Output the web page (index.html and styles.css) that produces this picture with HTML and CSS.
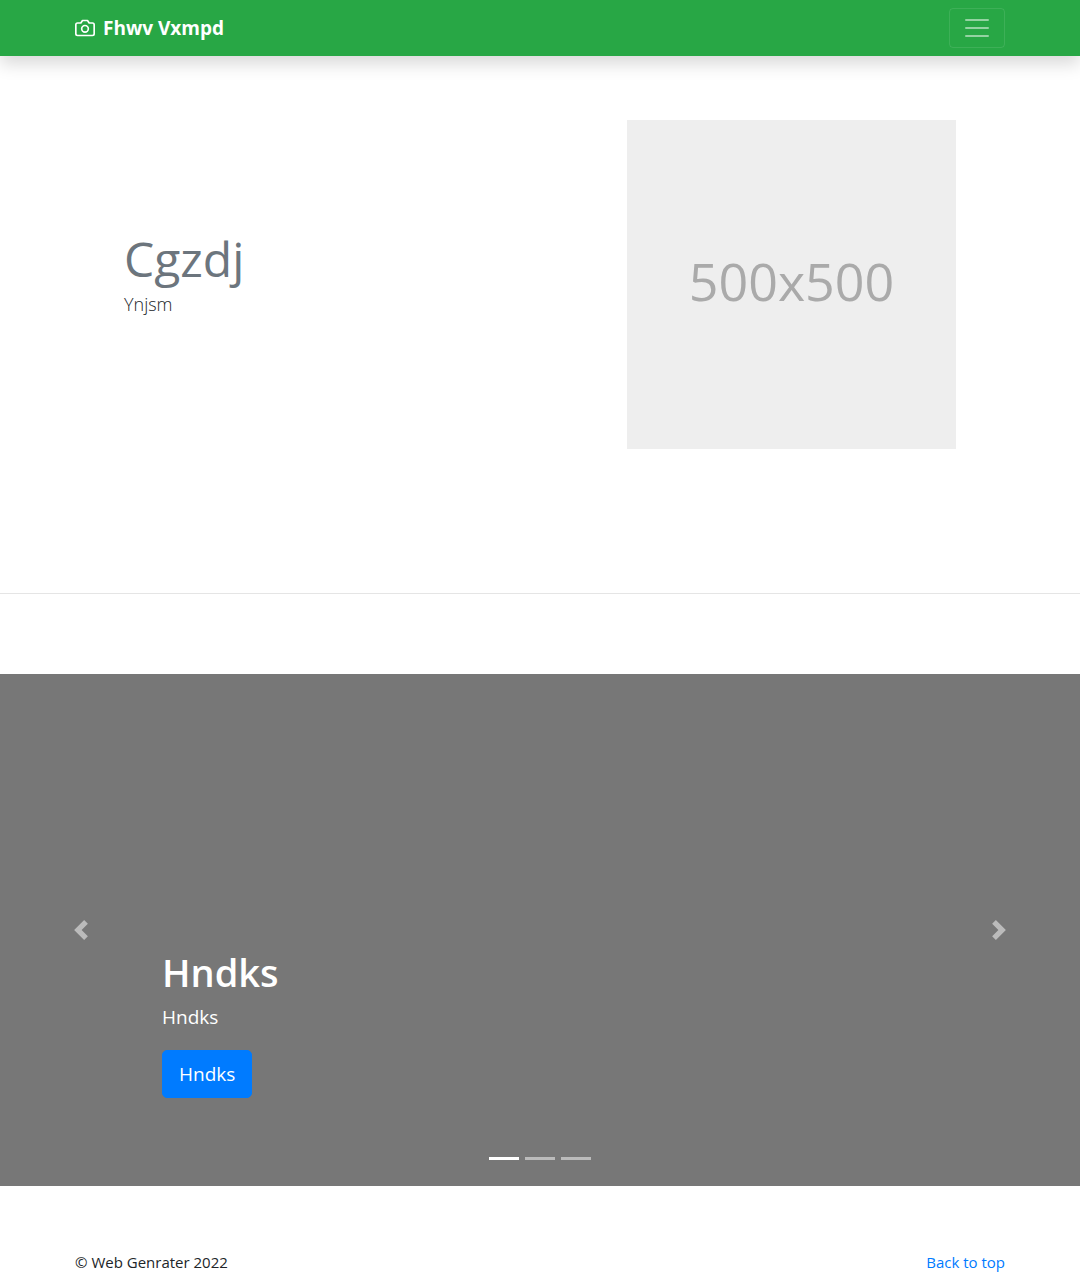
FILE: index.html
```html
<!DOCTYPE html>
<html lang="en">
<head>
<meta charset="utf-8">
<meta name="viewport" content="width=device-width, initial-scale=1">
<title>Fhwv Vxmpd</title>
<link rel="stylesheet" href="styles.css">
</head>
<body id="top">
<header class="navbar">
  <div class="container navbar-inner">
    <a class="brand" href="#top">
      <svg class="brand-icon" viewBox="0 0 24 24" fill="none" stroke="currentColor" stroke-width="2" stroke-linecap="round" stroke-linejoin="round" aria-hidden="true"><path d="M23 19a2 2 0 0 1-2 2H3a2 2 0 0 1-2-2V8a2 2 0 0 1 2-2h4l2-3h6l2 3h4a2 2 0 0 1 2 2z"/><circle cx="12" cy="13" r="4"/></svg>
      <strong>Fhwv Vxmpd</strong>
    </a>
    <button class="toggler" type="button" aria-label="Toggle navigation">
      <svg class="toggler-icon" viewBox="0 0 30 30" stroke="currentColor" stroke-width="2" stroke-linecap="round" stroke-miterlimit="10" aria-hidden="true"><path d="M4 7h22M4 15h22M4 23h22"/></svg>
    </button>
  </div>
</header>
<main>
  <section class="container hero">
    <div class="hero-text">
      <h1 class="hero-title">Cgzdj</h1>
      <p class="hero-lead">Ynjsm</p>
    </div>
    <div class="placeholder" role="img" aria-label="500x500">500x500</div>
  </section>
  <hr class="divider">
  <section class="carousel" aria-label="Slides">
    <button class="control" type="button" aria-label="Previous">
      <svg class="control-icon" viewBox="0 0 8 8" fill="currentColor" aria-hidden="true"><path d="M5.25 0l-4 4 4 4 1.500-1.500-2.500-2.500 2.500-2.500-1.500-1.500z"/></svg>
    </button>
    <div class="caption">
      <h2 class="caption-title">Hndks</h2>
      <p class="caption-text">Hndks</p>
      <a class="button" href="#top">Hndks</a>
    </div>
    <button class="control" type="button" aria-label="Next">
      <svg class="control-icon" viewBox="0 0 8 8" fill="currentColor" aria-hidden="true"><path d="M2.750 0l-1.500 1.500 2.500 2.500-2.500 2.500 1.500 1.500 4-4-4-4z"/></svg>
    </button>
    <div class="indicators">
      <button class="indicator active" type="button" aria-label="Slide 1"></button>
      <button class="indicator" type="button" aria-label="Slide 2"></button>
      <button class="indicator" type="button" aria-label="Slide 3"></button>
    </div>
  </section>
</main>
<footer class="container footer">
  <p class="copyright">© Web Genrater 2022</p>
  <a class="back" href="#top">Back to top</a>
</footer>
</body>
</html>
```
FILE: styles.css
```css
*, *::before, *::after { box-sizing: border-box; }

body {
  margin: 0;
  background: #fff;
  color: #212529;
  font-family: "Segoe UI", "Open Sans", "Noto Sans", sans-serif;
  font-size: 15px;
  line-height: 24px;
}

h1, h2, p { margin: 0; }
a { color: #007bff; text-decoration: none; }
button { padding: 0; border: 0; background: none; cursor: pointer; }

.container {
  width: 100%;
  max-width: 960px;
  margin: 0 auto;
  padding: 0 15px;
}

.navbar {
  padding: 8px 0;
  background: #28a745;
  box-shadow: 0 8px 16px rgba(0, 0, 0, .15);
}
.navbar-inner {
  display: flex;
  align-items: center;
  justify-content: space-between;
}
.brand {
  display: flex;
  align-items: center;
  gap: 8px;
  color: #fff;
  font-size: 19px;
  line-height: 30px;
}
.brand-icon { width: 20px; height: 20px; }
.toggler {
  display: flex;
  padding: 4px 12px;
  border: 1px solid rgba(255, 255, 255, .1);
  border-radius: 4px;
  color: rgba(255, 255, 255, .5);
}
.toggler-icon { width: 30px; height: 30px; }

.hero {
  display: grid;
  grid-template-columns: 1fr 329px;
  gap: 48px;
  align-items: center;
  padding: 64px;
  padding-bottom: 144px;
}
.hero-title {
  margin-bottom: 4px;
  color: #6c757d;
  font-size: 48px;
  font-weight: 400;
  line-height: 54px;
}
.hero-lead {
  margin-bottom: 20px;
  font-size: 18px;
  font-weight: 300;
  line-height: 28px;
}
.placeholder {
  display: flex;
  align-items: center;
  justify-content: center;
  aspect-ratio: 1;
  padding-bottom: 8px;
  background: #eee;
  color: #aaa;
  font-family: "Open Sans", "Noto Sans", sans-serif;
  font-size: 52px;
}

.divider {
  margin: 0 0 80px;
  border: 0;
  border-top: 1px solid rgba(0, 0, 0, .1);
}

.carousel {
  position: relative;
  display: grid;
  grid-template-columns: 15% 1fr 15%;
  min-height: 512px;
  background: #777;
  color: #fff;
}
.control {
  display: flex;
  align-items: center;
  justify-content: center;
  color: #fff;
  opacity: .5;
}
.control-icon { width: 20px; height: 20px; }
.caption {
  display: flex;
  flex-direction: column;
  align-items: flex-start;
  justify-content: flex-end;
  padding-bottom: 88px;
}
.caption-title {
  margin-bottom: 6px;
  font-size: 38px;
  font-weight: 600;
  line-height: 48px;
}
.caption-text {
  margin-bottom: 18px;
  font-size: 19px;
  line-height: 30px;
}
.button {
  padding: 8px 16px;
  border: 1px solid #007bff;
  border-radius: 5px;
  background: #007bff;
  color: #fff;
  font-size: 19px;
  line-height: 30px;
}
.indicators {
  position: absolute;
  right: 0;
  bottom: 16px;
  left: 0;
  display: flex;
  justify-content: center;
  gap: 6px;
}
.indicator {
  width: 30px;
  height: 23px;
  border: solid transparent;
  border-width: 10px 0;
  background: #fff;
  background-clip: padding-box;
  opacity: .5;
}
.indicator.active { opacity: 1; }

.footer {
  display: flex;
  justify-content: space-between;
  padding-top: 64px;
}
```
